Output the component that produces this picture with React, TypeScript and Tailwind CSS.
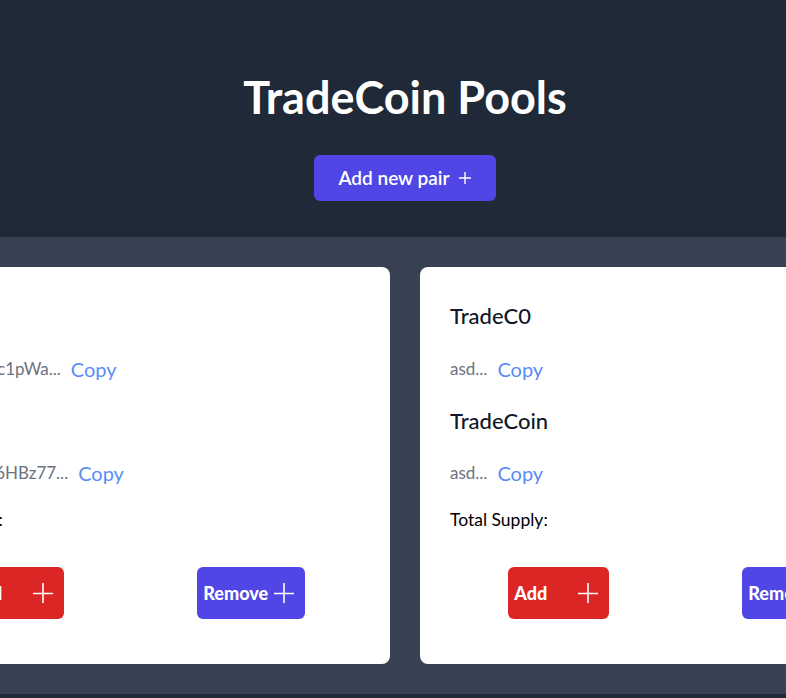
import React from 'react';

const pools = [
  {
    id: 'p1',
    tokenA: { name: 'TradeC0', address: '9vRtWq3kHc1pWa' },
    tokenB: { name: 'TradeC1', address: 'Fx2LkQ8rTd6HBz77' },
  },
  {
    id: 'p2',
    tokenA: { name: 'TradeC0', address: 'asd' },
    tokenB: { name: 'TradeCoin', address: 'asd' },
  },
];

function PlusIcon({ className }: { className?: string }) {
  return (
    <svg viewBox="0 0 20 20" className={className} fill="none" stroke="currentColor" strokeWidth={1.6}>
      <path d="M0 10.5h20M10 0v21" />
    </svg>
  );
}

function AddressRow({ address, offset }: { address: string; offset: string }) {
  return (
    <div className={`flex items-center h-7 ${offset}`}>
      <span className="text-[17px] text-[#6b7280] whitespace-nowrap">{address}...</span>
      <button className="ml-[10px] text-xl text-[#5b8cf5]">Copy</button>
    </div>
  );
}

function PoolCard({ pool }: { pool: (typeof pools)[number] }) {
  return (
    <div className="w-[515px] shrink-0 bg-white rounded-lg px-[30px] pt-[34px] pb-[45px]">
      <div className="flex items-center h-7 text-[22px] font-medium text-[#111827]">{pool.tokenA.name}</div>
      <AddressRow address={pool.tokenA.address} offset="mt-[26px]" />
      <div className="flex items-center h-7 mt-[23px] text-[22px] font-medium text-[#111827]">{pool.tokenB.name}</div>
      <AddressRow address={pool.tokenB.address} offset="mt-[25px]" />
      <div className="flex items-center h-7 mt-[19px] text-[17.5px] text-black">Total Supply:</div>

      <div className="grid grid-cols-2 gap-5 justify-items-center mt-[33px]">
        <button className="flex items-center justify-between h-[52px] min-w-[101px] pl-[6px] pr-[11px] rounded-md bg-[#dc2626] text-white text-lg font-black">
          <span>Add</span>
          <PlusIcon className="w-5 h-5 ml-[6px]" />
        </button>
        <button className="flex items-center justify-between h-[52px] min-w-[101px] pl-[6px] pr-[11px] rounded-md bg-[#4f46e5] text-white text-lg font-black">
          <span>Remove</span>
          <PlusIcon className="w-5 h-5 ml-[6px]" />
        </button>
      </div>
    </div>
  );
}

export default function App() {
  return (
    <div className="min-h-screen w-full overflow-hidden bg-[#1f2937] font-['Lato','Noto_Sans',sans-serif]">
      <div className="w-[810px]">
        {/* Header */}
        <div className="bg-[#1f2937] pt-[70px] pb-[36px] flex flex-col items-center">
          <h1 className="h-[56px] flex items-center text-[45px] font-bold text-white">TradeCoin Pools</h1>
          <button className="mt-[29px] h-[46px] pl-[24px] pr-[25px] flex items-center rounded-md bg-[#4f46e5] text-white text-[19px] font-semibold">
            Add new pair
            <svg viewBox="0 0 12 12" className="w-3 h-3 ml-[9px]" fill="none" stroke="currentColor" strokeWidth={1.4}>
              <path d="M0 6h12M6 0v12" />
            </svg>
          </button>
        </div>

        {/* Pools */}
        <div className="bg-[#374151] py-[30px] flex justify-center gap-[30px]">
          {pools.map((pool) => (
            <PoolCard key={pool.id} pool={pool} />
          ))}
        </div>
      </div>
    </div>
  );
}
